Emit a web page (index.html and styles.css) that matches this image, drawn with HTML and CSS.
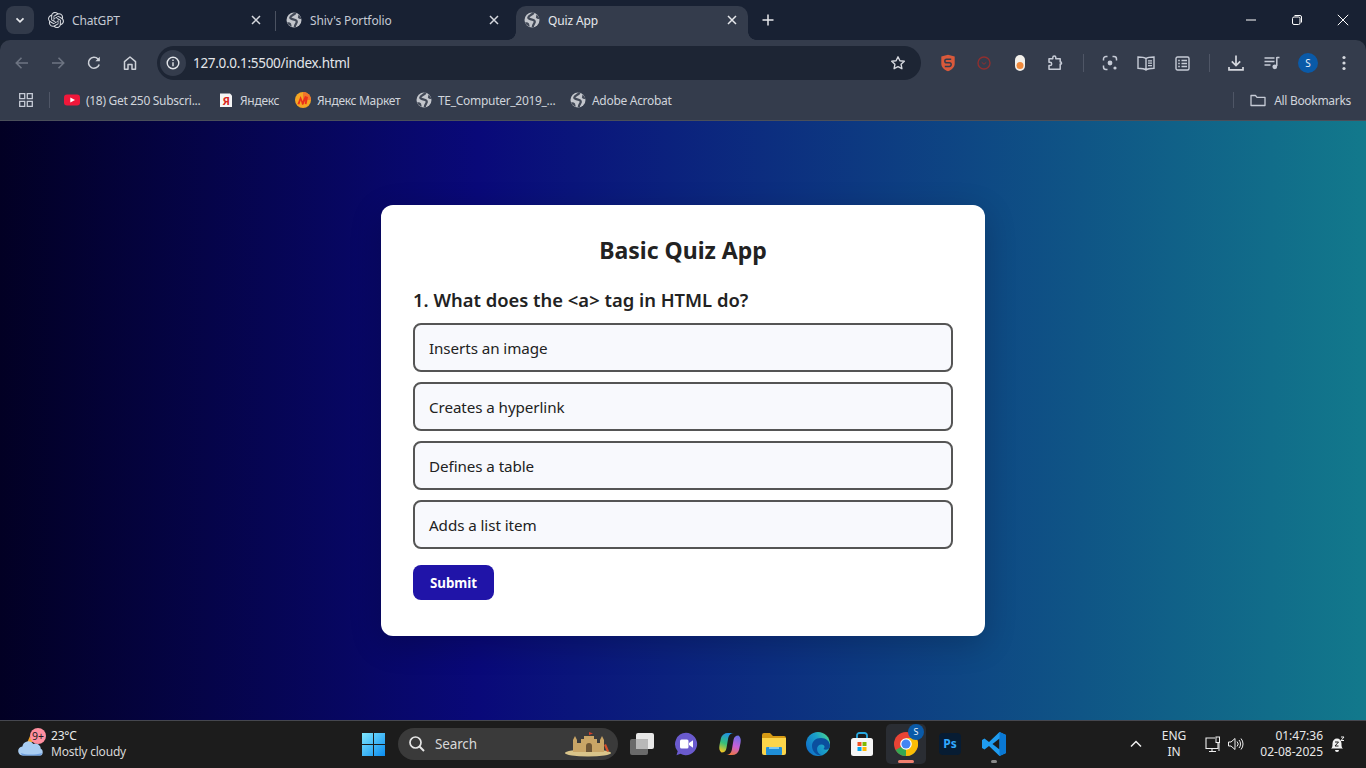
FILE: index.html
```html
<!DOCTYPE html>
<html lang="en">
<head>
<meta charset="utf-8">
<title>Quiz App</title>
<link rel="stylesheet" href="styles.css">
</head>
<body>
<svg class="defs" width="0" height="0" aria-hidden="true">
  <symbol id="globe" viewBox="0 0 16 16">
    <circle cx="8" cy="8" r="7.500" fill="#c3c6cc"/>
    <path d="M9.500.8C8.500 3 4.500 3.300 4.300 5.500 4.200 7.800 9.800 6.800 10.700 9.200 11.400 11.300 8.500 12.300 8.800 15.200" fill="none" stroke="#424957" stroke-width="2.300"/>
    <path d="M1 10.500c1.500-.6 3-.2 4 1l.8 3.200C3.500 14 1.800 12.500 1 10.500zM12.500 2.500c1.500 1.200 2.500 2.800 2.900 4.500-1.500.2-2.700-.2-3.500-1.200z" fill="#424957"/>
  </symbol>
</svg>

<div class="window">
  <header class="tabstrip">
    <button class="tab-search"><svg width="12" height="12" viewBox="0 0 12 12"><path d="M2.500 4.300 6 7.800l3.500-3.500" fill="none" stroke="#e6e8ec" stroke-width="1.700"/></svg></button>
    <div class="tab tab-idle tab-first">
      <svg class="fav" width="16" height="16" viewBox="0 0 24 24"><path fill="#d8dbe0" d="M22.2819 9.8211a5.9847 5.9847 0 0 0-.5157-4.9108 6.0462 6.0462 0 0 0-6.5098-2.9A6.0651 6.0651 0 0 0 4.9807 4.1818a5.9847 5.9847 0 0 0-3.9977 2.9 6.0462 6.0462 0 0 0 .7427 7.0966 5.98 5.98 0 0 0 .511 4.9107 6.051 6.051 0 0 0 6.5146 2.9001A5.9847 5.9847 0 0 0 13.2599 24a6.0557 6.0557 0 0 0 5.7718-4.2058 5.9894 5.9894 0 0 0 3.9977-2.9001 6.0557 6.0557 0 0 0-.7475-7.073zm-9.022 12.6081a4.4755 4.4755 0 0 1-2.8764-1.0408l.1419-.0804 4.7783-2.7582a.7948.7948 0 0 0 .3927-.6813v-6.7369l2.02 1.1686a.071.071 0 0 1 .038.052v5.5826a4.504 4.504 0 0 1-4.4945 4.4944zm-9.6607-4.1254a4.4708 4.4708 0 0 1-.5346-3.0137l.142.0852 4.783 2.7582a.7712.7712 0 0 0 .7806 0l5.8428-3.3685v2.3324a.0804.0804 0 0 1-.0332.0615L9.74 19.9502a4.4992 4.4992 0 0 1-6.1408-1.6464zM2.3408 7.8956a4.485 4.485 0 0 1 2.3655-1.9728V11.6a.7664.7664 0 0 0 .3879.6765l5.8144 3.3543-2.0201 1.1685a.0757.0757 0 0 1-.071 0l-4.8303-2.7865A4.504 4.504 0 0 1 2.3408 7.872zm16.5963 3.8558L13.1038 8.364 15.1192 7.2a.0757.0757 0 0 1 .071 0l4.8303 2.7913a4.4944 4.4944 0 0 1-.6765 8.1042v-5.6772a.79.79 0 0 0-.407-.667zm2.0107-3.0231l-.142-.0852-4.7735-2.7818a.7759.7759 0 0 0-.7854 0L9.409 9.2297V6.8974a.0662.0662 0 0 1 .0284-.0615l4.8303-2.7866a4.4992 4.4992 0 0 1 6.6802 4.66zM8.3065 12.863l-2.02-1.1638a.0804.0804 0 0 1-.038-.0567V6.0742a4.4992 4.4992 0 0 1 7.3757-3.4537l-.142.0805L8.704 5.459a.7948.7948 0 0 0-.3927.6813zm1.0976-2.3654l2.602-1.4998 2.6069 1.4998v2.9994l-2.5974 1.4997-2.6067-1.4997Z"/></svg>
      <span class="tab-title">ChatGPT</span>
      <svg class="tab-x" width="10" height="10" viewBox="0 0 10 10"><path d="M1 1l8 8M9 1 1 9" stroke="#d5d8de" stroke-width="1.500"/></svg>
    </div>
    <span class="tab-sep"></span>
    <div class="tab tab-idle tab-second">
      <svg class="fav" width="16" height="16"><use href="#globe"/></svg>
      <span class="tab-title">Shiv's Portfolio</span>
      <svg class="tab-x" width="10" height="10" viewBox="0 0 10 10"><path d="M1 1l8 8M9 1 1 9" stroke="#d5d8de" stroke-width="1.500"/></svg>
    </div>
    <div class="tab tab-active">
      <svg class="fav" width="16" height="16"><use href="#globe"/></svg>
      <span class="tab-title">Quiz App</span>
      <svg class="tab-x" width="10" height="10" viewBox="0 0 10 10"><path d="M1 1l8 8M9 1 1 9" stroke="#e6e8ec" stroke-width="1.500"/></svg>
    </div>
    <button class="tab-new"><svg width="12" height="12" viewBox="0 0 12 12"><path d="M6 .5v11M.500 6h11" stroke="#e6e8ec" stroke-width="1.500"/></svg></button>
    <div class="win-controls">
      <svg width="12" height="12" viewBox="0 0 12 12"><path d="M1 6h10" stroke="#fff"/></svg>
      <svg width="12" height="12" viewBox="0 0 12 12"><rect x="1.500" y="3" width="7.500" height="7.500" rx="1.500" fill="none" stroke="#fff"/><path d="M3.500 1.500h5.500a1.500 1.500 0 0 1 1.500 1.500v5.500" fill="none" stroke="#fff"/></svg>
      <svg width="12" height="12" viewBox="0 0 12 12"><path d="M.8.8l10.400 10.400M11.200.8.8 11.200" stroke="#fff"/></svg>
    </div>
  </header>

  <nav class="toolbar">
    <span class="tool"><svg width="16" height="16" viewBox="0 0 16 16"><path d="M14 8H2.500M7.500 2.800 2.300 8l5.200 5.200" fill="none" stroke="#6d7482" stroke-width="1.600"/></svg></span>
    <span class="tool"><svg width="16" height="16" viewBox="0 0 16 16"><path d="M2 8h11.500M8.500 2.800 13.700 8l-5.200 5.200" fill="none" stroke="#6d7482" stroke-width="1.600"/></svg></span>
    <span class="tool"><svg width="16" height="16" viewBox="0 0 16 16"><path d="M13.200 9.500A5.500 5.500 0 1 1 12 4l1.300 1.400" fill="none" stroke="#cdd1d8" stroke-width="1.600"/><path d="M13.800 1.800v4.400H9.400z" fill="#cdd1d8"/></svg></span>
    <span class="tool"><svg width="16" height="16" viewBox="0 0 16 16"><path d="M2.500 14.200V6.600L8 2l5.500 4.600v7.600H10V9.600H6v4.600z" fill="none" stroke="#cdd1d8" stroke-width="1.500" stroke-linejoin="round"/></svg></span>
    <div class="omnibox">
      <span class="site-info"><svg width="14" height="14" viewBox="0 0 14 14"><circle cx="7" cy="7" r="5.800" fill="none" stroke="#e3e6ea" stroke-width="1.400"/><path d="M7 6.200v4M7 3.600v1.400" stroke="#e3e6ea" stroke-width="1.400"/></svg></span>
      <span class="url">127.0.0.1:5500/index.html</span>
      <svg class="star" width="16" height="16" viewBox="0 0 16 16"><path d="M8 1.800l1.900 4 4.400.5-3.200 3 .8 4.400L8 11.600l-3.900 2.100.8-4.400-3.200-3 4.400-.5z" fill="none" stroke="#d5d8de" stroke-width="1.400" stroke-linejoin="round"/></svg>
    </div>
    <span class="tool"><svg width="16" height="18" viewBox="0 0 16 18"><path d="M1.300 2.500 8 .8l6.700 1.700v7.200c0 3.500-3 6-6.700 7.500-3.700-1.500-6.700-4-6.700-7.500z" fill="#d9593b"/><path d="M11.200 5.200H6.600a1.800 1.800 0 0 0 0 3.600h2.800a1.800 1.800 0 0 1 0 3.600H4.800" fill="none" stroke="#343c4c" stroke-width="1.500"/></svg></span>
    <span class="tool"><svg width="14" height="14" viewBox="0 0 14 14"><circle cx="7" cy="7" r="6" fill="none" stroke="#8f2f2f" stroke-width="1.400"/><path d="M4.700 6.300 7 8.300l2.300-2" fill="none" stroke="#8f2f2f" stroke-width="1"/></svg></span>
    <span class="tool"><svg width="12" height="18" viewBox="0 0 12 18"><rect x="1" y="1" width="10" height="16" rx="5" fill="#f3f0ea"/><circle cx="6" cy="11.500" r="3.500" fill="#f08a3c"/></svg></span>
    <span class="tool"><svg width="18" height="18" viewBox="0 0 18 18"><path d="M2 4.800h3.800V3.400a1.500 1.500 0 0 1 3 0v1.400h4.400v3.300h1a1.600 1.600 0 0 1 0 1.900h-1v5.300H2v-3.700h1a1.700 1.700 0 0 0 0-3.400H2z" fill="none" stroke="#c6cbd6" stroke-width="1.500" stroke-linejoin="round"/></svg></span>
    <span class="tool-sep"></span>
    <span class="tool"><svg width="16" height="16" viewBox="0 0 16 16"><path d="M1.500 5.500V4A2.500 2.500 0 0 1 4 1.500h1.500M10.500 1.500H12A2.500 2.500 0 0 1 14.500 4v1.500M5.500 14.500H4A2.500 2.500 0 0 1 1.500 12v-1.500" fill="none" stroke="#c6cbd6" stroke-width="1.500"/><circle cx="8" cy="8" r="2.400" fill="#c6cbd6"/><circle cx="13" cy="13" r="1.600" fill="#c6cbd6"/></svg></span>
    <span class="tool"><svg width="18" height="15" viewBox="0 0 18 15"><path d="M9 2.600C7.500 1.400 5 1 1 1v11.200c4 0 6.500.4 8 1.800 1.500-1.400 4-1.800 8-1.800V1c-4 0-6.500.4-8 1.600zM9 2.600V14" fill="none" stroke="#c6cbd6" stroke-width="1.400"/><path d="M11 4.800h4M11 7.200h4M11 9.600h4" stroke="#c6cbd6" stroke-width="1.300"/></svg></span>
    <span class="tool"><svg width="15" height="15" viewBox="0 0 15 15"><rect x="1" y="1" width="13" height="13" rx="1.500" fill="none" stroke="#c6cbd6" stroke-width="1.400"/><path d="M6.500 4.500H12M6.500 7.500H12M6.500 10.500H12M3.200 4.500h1.600M3.200 7.500h1.600M3.200 10.500h1.600" stroke="#c6cbd6" stroke-width="1.300"/></svg></span>
    <span class="tool-sep"></span>
    <span class="tool"><svg width="18" height="18" viewBox="0 0 18 18"><path d="M9 1.500v10M4.800 7.400 9 11.600l4.200-4.200M2 13v2.800h14V13" fill="none" stroke="#d5d8de" stroke-width="1.700"/></svg></span>
    <span class="tool"><svg width="16" height="14" viewBox="0 0 16 14"><path d="M.500 2h10M.500 5.500h10M.500 9h6" stroke="#c6cbd6" stroke-width="1.400"/><path d="M12.800 1.500h2.700M12.800 1v9" stroke="#c6cbd6" stroke-width="1.500"/><circle cx="10.800" cy="10.800" r="2.400" fill="#c6cbd6"/></svg></span>
    <span class="tool"><span class="avatar">S</span></span>
    <span class="tool"><svg width="4" height="16" viewBox="0 0 4 16"><circle cx="2" cy="2.500" r="1.600" fill="#d5d8de"/><circle cx="2" cy="8" r="1.600" fill="#d5d8de"/><circle cx="2" cy="13.500" r="1.600" fill="#d5d8de"/></svg></span>
  </nav>

  <div class="bookmarks">
    <span class="apps"><svg width="14" height="14" viewBox="0 0 14 14"><path d="M.7.700h5v5h-5zM8.300.700h5v5h-5zM.7 8.300h5v5h-5zM8.300 8.300h5v5h-5z" fill="none" stroke="#c6cbd6" stroke-width="1.300"/></svg></span>
    <span class="bm-sep bm-sep-left"></span>
    <span class="bm bm-yt"><svg width="16" height="12" viewBox="0 0 16 12"><rect width="16" height="11" y=".5" rx="3" fill="#f0173a"/><path d="M6.300 3.400v5.200L11 6z" fill="#fff"/></svg><span>(18) Get 250 Subscri...</span></span>
    <span class="bm bm-ya"><svg width="14" height="16" viewBox="0 0 14 16"><path d="M1 1.500h10l2 2V15H1z" fill="#f4f4f4"/><text x="3.400" y="13" class="ya-letter">Я</text></svg><span>Яндекс</span></span>
    <span class="bm bm-mk"><svg width="16" height="16" viewBox="0 0 16 16"><circle cx="8" cy="8" r="8" fill="#f5a623"/><path d="M8 0a8 8 0 0 1 8 8H8z" fill="#f1742b"/><path d="M2.500 12 5.600 4l2 5.200L10 4l3 1-1.500 7.200-1.800-.3.600-3.700-2 4.600H7L5.800 8.300 4.400 12.500z" fill="#e9301c"/></svg><span>Яндекс Маркет</span></span>
    <span class="bm bm-te"><svg width="16" height="16"><use href="#globe"/></svg><span>TE_Computer_2019_...</span></span>
    <span class="bm"><svg width="16" height="16"><use href="#globe"/></svg><span>Adobe Acrobat</span></span>
    <span class="bm-all">
      <span class="bm-sep"></span>
      <span class="bm bm-folder"><svg width="16" height="13" viewBox="0 0 16 13"><path d="M1 11.500V1.500h4.500L7 3.300h8v8.200z" fill="none" stroke="#c6cbd6" stroke-width="1.300" stroke-linejoin="round"/></svg><span>All Bookmarks</span></span>
    </span>
  </div>

  <main class="page">
    <section class="card">
      <h1 class="card-title">Basic Quiz App</h1>
      <h2 class="question">1. What does the &lt;a&gt; tag in HTML do?</h2>
      <ul class="options">
        <li class="option">Inserts an image</li>
        <li class="option">Creates a hyperlink</li>
        <li class="option">Defines a table</li>
        <li class="option">Adds a list item</li>
      </ul>
      <button class="submit">Submit</button>
    </section>
  </main>

  <footer class="taskbar">
    <div class="weather">
      <span class="weather-icon">
        <svg width="28" height="26" viewBox="0 0 28 26"><path d="M3 12l6-1 3-7 3 6z" fill="#f2a32a"/><path d="M5 23.500a4.500 4.500 0 0 1-.6-9 6 6 0 0 1 11-2.500 5.500 5.500 0 0 1 7.500 5c2.500.3 2.500 6.500-.5 6.500z" fill="#a9cdf2"/><path d="M3 21c5 2 14 2 21 0-.3 1.500-1 2.500-2 2.500H5c-1 0-1.700-1-2-2.500z" fill="#6f9fe0"/></svg>
        <span class="badge">9+</span>
      </span>
      <span class="weather-text"><span class="temp">23°C</span><span class="cond">Mostly cloudy</span></span>
    </div>
    <div class="center">
      <svg class="win-logo" width="23" height="23" viewBox="0 0 23 23"><defs><linearGradient id="wg" x1="0" y1="0" x2="1" y2="1"><stop offset="0" stop-color="#7fe6fd"/><stop offset="1" stop-color="#0a8cf0"/></linearGradient></defs><path d="M0 0h11v11H0zM12 0h11v11H12zM0 12h11v11H0zM12 12h11v11H12z" fill="url(#wg)"/></svg>
      <div class="search">
        <svg width="18" height="18" viewBox="0 0 18 18"><circle cx="7.500" cy="7.500" r="5.500" fill="none" stroke="#e6e6e6" stroke-width="1.700"/><path d="M11.500 11.500 16 16" stroke="#e6e6e6" stroke-width="1.900"/></svg>
        <span class="search-label">Search</span>
        <svg class="castle" width="48" height="26" viewBox="0 0 48 26"><ellipse cx="23" cy="22" rx="23" ry="3.500" fill="#d9c48a"/><path d="M8 21V9l2-4 2 4v3h4V8h3V5h10v3h3v4h3V9l2-4 2 4v12z" fill="#c9a566"/><path d="M21 21v-6a3 3 0 0 1 6 0v6z" fill="#6d5535"/><path d="M24 5V1l4 1.500L24 4z" fill="#d8402a"/><path d="M42 21l-3-7 2-1 3 7z" fill="#d8502a"/></svg>
      </div>
      <div class="apps-row">
        <span class="app"><svg width="24" height="22" viewBox="0 0 24 22"><rect x="6" y="0" width="18" height="16" rx="2" fill="#e8e8e8"/><rect x="0" y="6" width="18" height="16" rx="2" fill="#6a6a6a"/><rect x="6" y="6" width="12" height="10" fill="#b8b8b8"/></svg></span>
        <span class="app"><svg width="24" height="24" viewBox="0 0 24 24"><path d="M12 .8a11.200 11.200 0 1 1-5.500 21l-4 1.400 1.200-4A11.200 11.200 0 0 1 12 .8z" fill="#6a5acd"/><rect x="6" y="7.500" width="8.500" height="9" rx="1.500" fill="#fff"/><path d="M15 11l4-2.800v7.600L15 13z" fill="#fff"/></svg></span>
        <span class="app"><svg width="24" height="24" viewBox="0 0 24 24"><defs><linearGradient id="cp1" x1=".6" y1="0" x2=".3" y2="1"><stop offset="0" stop-color="#1f8fe8"/><stop offset=".55" stop-color="#35c07a"/><stop offset="1" stop-color="#f6c723"/></linearGradient><linearGradient id="cp2" x1=".6" y1="0" x2=".3" y2="1"><stop offset="0" stop-color="#6f6fe8"/><stop offset=".5" stop-color="#c85fd8"/><stop offset="1" stop-color="#f0783a"/></linearGradient></defs><path d="M10 1h6c-3 0-5 1.500-5.800 5L8.500 16c-.5 3-2 4.500-5 4.500C1 18.500 1 16 1.500 13L3 6C3.800 3 6.500 1 10 1Z" fill="url(#cp1)"/><path d="M14 23H8c3 0 5-1.500 5.800-5L15.500 8c.5-3 2-4.500 5-4.500C23 5.500 23 8 22.500 11L21 18c-.8 3-3.500 5-7 5Z" fill="url(#cp2)"/></svg></span>
        <span class="app"><svg width="24" height="22" viewBox="0 0 24 22"><path d="M0 2a2 2 0 0 1 2-2h6l3 3h11a2 2 0 0 1 2 2v2H0z" fill="#d69a14"/><path d="M0 5h24v15a2 2 0 0 1-2 2H2a2 2 0 0 1-2-2z" fill="#fbd54a"/><rect x="4" y="14" width="16" height="8" rx="1" fill="#1f8fd8"/><rect x="7" y="14" width="10" height="2" fill="#7cc9f0"/></svg></span>
        <span class="app"><svg width="24" height="24" viewBox="0 0 24 24"><defs><linearGradient id="eg" x1="0" y1=".7" x2="1" y2=".1"><stop offset="0" stop-color="#0f6fc9"/><stop offset=".55" stop-color="#1aa0c8"/><stop offset="1" stop-color="#4fdc8a"/></linearGradient></defs><circle cx="12" cy="12" r="12" fill="url(#eg)"/><path d="M24 14c0-5-4-8-9-8-5.500 0-9 3.500-9 8 0 5 4 10 10 9.500-3-1-5-3.500-5-6.500 0-2.500 2-4.500 4.500-4.500 2 0 3 1 3 2.300 0 1-.5 1.700-1 2.200 2 1.500 6.500.5 6.500-3z" fill="#0b4f9e"/></svg></span>
        <span class="app"><svg width="24" height="24" viewBox="0 0 24 24"><path d="M7 7V3.500A2.500 2.500 0 0 1 9.500 1h5A2.500 2.500 0 0 1 17 3.500V7" fill="none" stroke="#27a8e0" stroke-width="1.800"/><rect x="1" y="6" width="22" height="18" rx="2.500" fill="#f6f6f6"/><path d="M7.500 10h4v4h-4z" fill="#f25022"/><path d="M12.500 10h4v4h-4z" fill="#7fba00"/><path d="M7.500 15h4v4h-4z" fill="#00a4ef"/><path d="M12.500 15h4v4h-4z" fill="#ffb900"/></svg></span>
        <span class="app app-active">
          <svg width="24" height="24" viewBox="0 0 24 24"><circle cx="12" cy="12" r="12" fill="#e84335"/><path d="M12 12 1.600 18A12 12 0 0 0 12 24a12 12 0 0 0 10.400-6z" fill="#34a853"/><path d="M12 12v12A12 12 0 0 0 22.400 6H12z" fill="#fbbc05"/><circle cx="12" cy="12" r="5.800" fill="#fff"/><circle cx="12" cy="12" r="4.600" fill="#4285f4"/></svg>
          <span class="app-badge">S</span>
          <span class="run-active"></span>
        </span>
        <span class="app"><span class="ps">Ps</span></span>
        <span class="app"><svg width="24" height="24" viewBox="0 0 24 24"><path d="M17.500 0 24 3v18l-6.500 3L7 14l-4.500 3.500L0 16V8l2.500-1.500L7 10z" fill="#1f9cf0"/><path d="M17.500 6.500 10.500 12l7 5.500z" fill="#1c1c1c"/><path d="M17.500 0 24 3v18l-6.500 3z" fill="#0a78d4"/></svg><span class="run-dot"></span></span>
      </div>
    </div>
    <div class="tray">
      <svg class="caret" width="12" height="8" viewBox="0 0 12 8"><path d="M1 6.500 6 1.500l5 5" fill="none" stroke="#f0f0f0" stroke-width="1.500"/></svg>
      <span class="lang"><span>ENG</span><span>IN</span></span>
      <svg class="tray-net" width="16" height="17" viewBox="0 0 16 17"><path d="M10 2H1v10.500h12V7M4 15.500h7M7 12.500v3" fill="none" stroke="#eee" stroke-width="1.100"/><rect x="11" y="1" width="3.500" height="5.500" fill="none" stroke="#eee" stroke-width="1"/><path d="M14 7v8" stroke="#eee"/></svg>
      <svg class="tray-vol" width="17" height="14" viewBox="0 0 17 14"><path d="M.5 5v4h2.500L7 12.500v-11L3 5z" fill="none" stroke="#eee"/><path d="M9 4.500a3.500 3.500 0 0 1 0 5M11 3a6 6 0 0 1 0 8M13 1.500a8.500 8.500 0 0 1 0 11" fill="none" stroke="#eee"/></svg>
      <span class="clock"><span>01:47:36</span><span>02-08-2025</span></span>
      <svg class="tray-bell" width="15" height="16" viewBox="0 0 15 16"><path d="M1 12.500c1.500-1 1.500-2.500 1.500-5 0-3 2-5 4.500-5s4.500 2 4.500 5c0 2.500 0 4 1.500 5z" fill="#f2f2f2"/><path d="M5 14h4a2 2 0 0 1-4 0z" fill="#f2f2f2"/><path d="M5 6h3.500L5 10h3.500" fill="none" stroke="#1c1c1c"/><path d="M11 1h3l-3 3.500h3" fill="none" stroke="#f2f2f2"/></svg>
    </div>
  </footer>
</div>
</body>
</html>
```
FILE: styles.css
```css
* { box-sizing: border-box; }
html, body { margin: 0; height: 100%; overflow: hidden; }
body { font-family: "Noto Sans", "Open Sans", sans-serif; background: #18212f; }
.defs { position: absolute; }
.window { height: 768px; display: flex; flex-direction: column; }
button { font: inherit; border: 0; padding: 0; }

/* tab strip */
.tabstrip { height: 40px; flex: none; display: flex; align-items: flex-end; background: #182133; padding-left: 6px; color: #c5cad3; font-size: 12px; letter-spacing: -.12px; }
.tab-search { width: 28px; height: 28px; margin: 0 0 6px; border-radius: 8px; background: #323a4a; display: flex; align-items: center; justify-content: center; }
.tab { height: 34px; display: flex; align-items: center; padding: 0 11px 6px 8px; }
.tab-first { width: 235px; margin-left: 6px; padding-right: 14px; }
.tab-second { width: 230px; padding: 0 7px 6px 10px; }
.tab-active { width: 232px; margin-left: 10px; background: #343c4c; border-radius: 10px 10px 0 0; color: #e6e8ec; position: relative; }
.tab-active::before, .tab-active::after { content: ""; position: absolute; bottom: 0; width: 8px; height: 8px; background: radial-gradient(circle at 0 0, transparent 7.500px, #343c4c 8px); }
.tab-active::before { left: -8px; }
.tab-active::after { right: -8px; background: radial-gradient(circle at 100% 0, transparent 7.500px, #343c4c 8px); }
.fav { flex: none; }
.tab-title { margin-left: 8px; flex: 1; white-space: nowrap; }
.tab-second .tab-title { margin-left: 8px; }
.tab-x { flex: none; }
.tab-sep { width: 1px; height: 20px; margin: 0 0 9px; background: #4b5261; flex: none; }
.tab-new { width: 12px; height: 12px; margin: 0 0 14px 14px; background: none; display: flex; }
.win-controls { margin-left: auto; height: 40px; display: flex; align-items: center; gap: 34px; padding-right: 17px; }

/* toolbar */
.toolbar { height: 40px; flex: none; display: flex; align-items: center; background: #343c4c; padding: 6px 4px 0; border-radius: 10px 10px 0 0; color: #c6cbd6; }
.tool { width: 36px; height: 34px; flex: none; display: flex; align-items: center; justify-content: center; }
.tool-sep { width: 1px; height: 18px; background: #4f5666; margin: 0 8px 0 9px; flex: none; }
.omnibox { width: 764px; height: 34px; margin: 0 9px 0 9px; background: #1d2534; border-radius: 17px; display: flex; align-items: center; padding: 0 15px 0 3px; flex: none; }
.site-info { width: 26px; height: 26px; border-radius: 50%; background: #343c4c; display: flex; align-items: center; justify-content: center; flex: none; }
.url { margin-left: 7px; font-size: 13.500px; color: #e3e6ea; letter-spacing: -.3px; flex: 1; }
.star { flex: none; }
.avatar { width: 20px; height: 20px; border-radius: 50%; background: #0a5aa8; color: #e8f0fa; font-size: 10px; display: flex; align-items: center; justify-content: center; }

/* bookmarks */
.bookmarks { height: 41px; flex: none; display: flex; align-items: center; background: #343c4c; border-bottom: 1px solid #4a4f5a; padding-left: 19px; font-size: 12px; color: #d0d4db; letter-spacing: -.3px; }
.apps { width: 14px; height: 14px; display: flex; flex: none; }
.bm-sep { width: 1px; height: 16px; background: #4f5666; flex: none; margin: 0 16px 0 16px; }
.bm-sep-left { margin-right: 14px; }
.bm { display: flex; align-items: center; gap: 6px; white-space: nowrap; flex: none; }
.bm-yt { width: 155px; }
.bm-ya { width: 76px; gap: 7px; }
.bm-mk { width: 121px; }
.bm-te { width: 154px; }
.bm svg { flex: none; }
.bm-all { margin-left: auto; display: flex; align-items: center; padding-right: 15px; }
.bm-folder { gap: 8px; }
.ya-letter { font: 700 11px "Noto Sans", sans-serif; fill: #d8261c; }

/* page */
.page { flex: 1; min-height: 0; display: flex; align-items: center; justify-content: center; background: linear-gradient(90deg, #020024 0%, #090979 35%, #12798c 100%); }
.card { width: 604px; height: 431px; background: #fff; border-radius: 12px; padding: 31px 32px 32px; box-shadow: 0 8px 32px rgba(0, 0, 0, .2); color: #222; }
.card-title { margin: 0; font-size: 23px; font-weight: 700; line-height: 28px; text-align: center; color: #222; }
.question { margin: 24px 0 0; font-size: 18.400px; font-weight: 600; line-height: 24px; color: #222; }
.options { list-style: none; margin: 11px 0 0; padding: 0; display: flex; flex-direction: column; gap: 10px; }
.option { height: 49px; border: 2px solid #555; border-radius: 8px; background: #f8f9fd; padding: 0 14px; font-size: 15.200px; letter-spacing: -.08px; display: flex; align-items: center; color: #222; }
.submit { display: block; width: 81px; height: 35px; margin-top: 16px; border-radius: 8px; background: #2014a8; color: #fff; font-size: 13.330px; font-weight: 700; }

/* taskbar */
.taskbar { height: 48px; flex: none; background: #1c1c1c; border-top: 1px solid #45474f; padding-bottom: 1px; display: flex; align-items: center; color: #e8e8e8; font-size: 12px; position: relative; }
.weather { display: flex; align-items: center; width: 362px; padding-left: 18px; flex: none; }
.weather-icon { position: relative; width: 33px; height: 28px; flex: none; margin-top: 4px; }
.badge { position: absolute; left: 12px; top: -4px; width: 16px; height: 16px; border-radius: 50%; background: #ff8f9f; color: #1c1c1c; font-size: 10.500px; line-height: 16px; text-align: center; }
.weather-text { display: flex; flex-direction: column; line-height: 16px; letter-spacing: -.2px; }
.cond { color: #d8d8d8; }
.center { display: flex; align-items: center; flex: none; }
.win-logo { flex: none; }
.search { width: 220px; height: 32px; margin-left: 13px; border-radius: 16px; background: #3a3a3a; display: flex; align-items: center; padding-left: 10px; font-size: 13.500px; color: #d8d8d8; }
.search-label { margin-left: 9px; flex: 1; letter-spacing: -.15px; }
.castle { margin-right: 5px; }
.apps-row { display: flex; align-items: center; margin-left: 2px; }
.app { width: 44px; height: 40px; display: flex; align-items: center; justify-content: center; position: relative; flex: none; }
.app-active { background: #2a2d33; border-radius: 5px; width: 40px; margin: 0 2px; }
.app-badge { position: absolute; right: 2px; top: 0; width: 16px; height: 16px; border-radius: 50%; background: #0a5aa8; color: #e8f0fa; font-size: 9px; line-height: 16px; text-align: center; }
.run-active { position: absolute; bottom: 1px; left: 12px; width: 16px; height: 3px; border-radius: 2px; background: #f08070; }
.run-dot { position: absolute; bottom: 1px; left: 19px; width: 6px; height: 3px; border-radius: 2px; background: #8a8a8a; }
.ps { width: 22px; height: 22px; border-radius: 4px; background: #071c33; color: #31a8ff; font: 700 12px/22px "Noto Sans", sans-serif; text-align: center; }
.tray { position: absolute; right: 0; top: 0; bottom: 1px; width: 236px; display: flex; align-items: center; }
.caret { flex: none; }
.lang { width: 38px; margin-left: 13px; display: flex; flex-direction: column; align-items: center; line-height: 16px; flex: none; }
.tray-net { margin-left: 12px; flex: none; }
.tray-vol { margin-left: 7px; flex: none; }
.clock { width: 76px; margin-left: 2px; display: flex; flex-direction: column; align-items: flex-end; line-height: 16px; white-space: nowrap; flex: none; }
.tray-bell { margin-left: 7px; flex: none; }
```
